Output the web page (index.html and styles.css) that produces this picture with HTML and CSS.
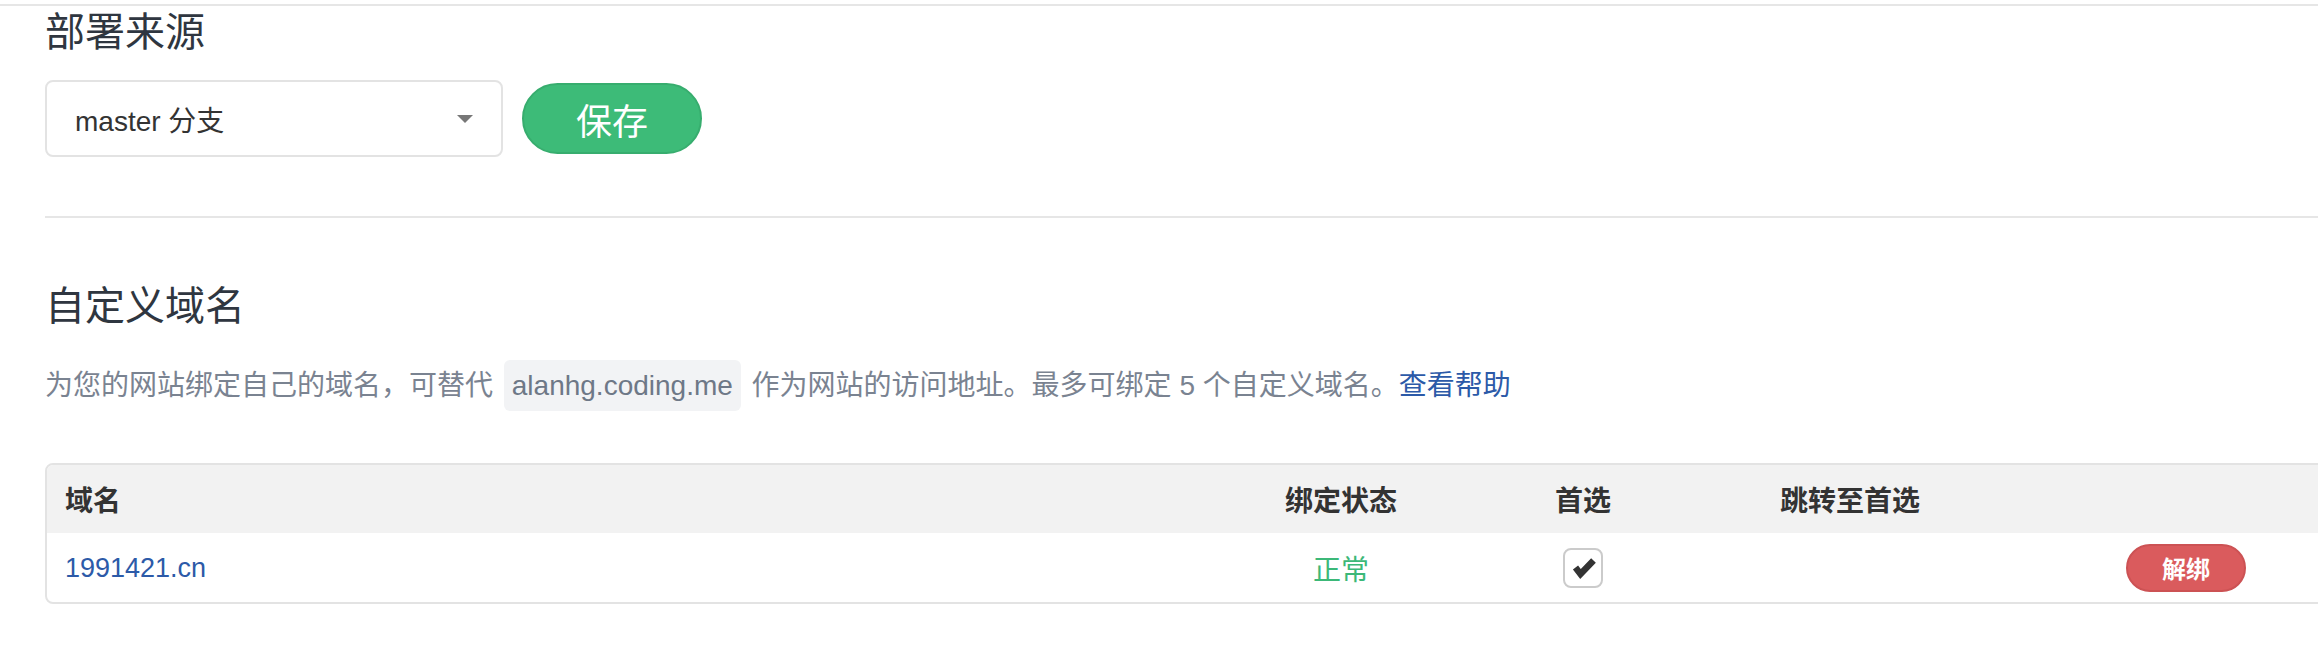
FILE: index.html
```html
<!DOCTYPE html>
<html lang="zh-CN">
<head>
<meta charset="utf-8">
<title>部署来源</title>
<link rel="stylesheet" href="styles.css">
</head>
<body>
<div class="topline"></div>
<main class="content">
  <section class="section">
    <h2 class="section-title">部署来源</h2>
    <div class="source-row">
      <div class="select">
        <span class="select-value">master 分支</span>
        <span class="caret"></span>
      </div>
      <button class="btn btn-save" type="button">保存</button>
    </div>
  </section>
  <hr class="divider">
  <section class="section">
    <h2 class="section-title title-domains">自定义域名</h2>
    <p class="desc">为您的网站绑定自己的域名，可替代 <code class="chip">alanhg.coding.me</code> 作为网站的访问地址。最多可绑定 5 个自定义域名。<a class="link" href="#">查看帮助</a></p>
    <table class="domains">
      <colgroup>
        <col class="col-domain">
        <col class="col-status">
        <col class="col-primary">
        <col class="col-redirect">
        <col class="col-actions">
      </colgroup>
      <thead>
        <tr>
          <th class="cell-domain">域名</th>
          <th>绑定状态</th>
          <th>首选</th>
          <th>跳转至首选</th>
          <th></th>
        </tr>
      </thead>
      <tbody>
        <tr>
          <td class="cell-domain"><a class="link domain-link" href="#">1991421.cn</a></td>
          <td class="status-ok">正常</td>
          <td>
            <span class="checkbox">
              <svg width="40" height="40" viewBox="0 0 40 40" aria-hidden="true">
                <polyline points="12.5,19.5 17.5,26 30.5,12.5" fill="none" stroke="#333" stroke-width="6.5" stroke-linejoin="miter" stroke-linecap="butt"/>
              </svg>
            </span>
          </td>
          <td></td>
          <td><button class="btn btn-unbind" type="button">解绑</button></td>
        </tr>
      </tbody>
    </table>
  </section>
</main>
</body>
</html>
```

FILE: styles.css
```css
html, body {
  margin: 0;
  padding: 0;
  overflow: hidden;
  background: #fff;
}

body {
  font-family: "Liberation Sans", "Noto Sans CJK SC", sans-serif;
  color: #333;
}

.topline {
  margin-top: 4px;
  border-top: 2px solid #e6e6e6;
}

.content {
  padding-left: 45px;
  width: 2340px;
}

.section-title {
  margin: 0;
  font-size: 40px;
  font-weight: normal;
  line-height: 52px;
  color: #2f3640;
}

.source-row {
  display: flex;
  align-items: center;
  gap: 19px;
  margin-top: 22px;
}

.select {
  box-sizing: border-box;
  width: 458px;
  height: 77px;
  border: 2px solid #e3e3e3;
  border-radius: 8px;
  padding: 0 28px;
  display: flex;
  align-items: center;
  justify-content: space-between;
  font-size: 28px;
  color: #333;
}

.caret {
  width: 0;
  height: 0;
  border-left: 8px solid transparent;
  border-right: 8px solid transparent;
  border-top: 8px solid #777;
}

.btn {
  font-family: inherit;
  color: #fff;
  cursor: pointer;
  padding: 0;
}

.btn-save {
  box-sizing: border-box;
  width: 180px;
  height: 71px;
  border-radius: 36px;
  background: #3dbb78;
  border: 2px solid #37ad6e;
  font-size: 36px;
}

.divider {
  border: 0;
  border-top: 2px solid #e6e6e6;
  margin: 59px 0 0;
  height: 0;
}

.title-domains {
  margin-top: 62px;
}

.desc {
  margin: 28px 0 0;
  font-size: 28px;
  line-height: 52px;
  color: #7a8391;
}

.chip {
  display: inline-block;
  font-family: inherit;
  font-size: 28px;
  line-height: 39px;
  padding: 6px 8px;
  margin: 0 3px;
  border-radius: 6px;
  background: #f2f3f5;
  color: #6e7887;
}

.link {
  color: #2c5aa8;
  text-decoration: none;
}

.domains {
  margin-top: 51px;
  width: 2334px;
  table-layout: fixed;
  border-collapse: separate;
  border-spacing: 0;
  border: 2px solid #e3e3e3;
  border-radius: 8px;
}

.col-domain { width: 1174px; }
.col-status { width: 240px; }
.col-primary { width: 244px; }
.col-redirect { width: 290px; }
.col-actions { width: 382px; }

.domains th,
.domains td {
  padding: 0;
  text-align: center;
  vertical-align: middle;
  font-size: 28px;
}

.domains th {
  height: 68px;
  background: #f2f2f2;
  font-weight: bold;
  color: #333;
}

.domains th:first-child {
  border-top-left-radius: 6px;
}

.domains td {
  height: 69px;
}

.domains .cell-domain {
  text-align: left;
  padding-left: 18px;
}

.domain-link {
  font-size: 27px;
}

.status-ok {
  color: #3cb878;
}

.checkbox {
  box-sizing: border-box;
  display: inline-flex;
  width: 40px;
  height: 40px;
  border: 2px solid #cbcbcb;
  border-radius: 8px;
  background: #fff;
  vertical-align: middle;
  align-items: center;
  justify-content: center;
}

.checkbox svg {
  display: block;
  margin: -2px;
}

.btn-unbind {
  box-sizing: border-box;
  width: 120px;
  height: 48px;
  border-radius: 24px;
  background: #da5b5d;
  border: 2px solid #cc5254;
  font-size: 24px;
  font-weight: bold;
  vertical-align: middle;
}
```
